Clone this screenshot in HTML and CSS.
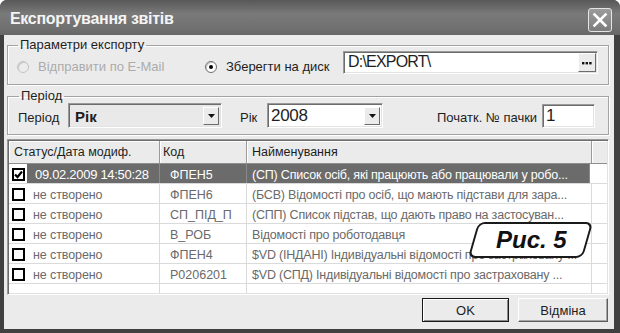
FILE: index.html
```html
<!DOCTYPE html>
<html lang="uk">
<head>
<meta charset="utf-8">
<title>Експортування звітів</title>
<link rel="stylesheet" href="styles.css">
</head>
<body>
<div class="window">
  <div class="titlebar">
    <span class="title">Експортування звітів</span>
    <span class="close"><svg width="16" height="16" viewBox="0 0 16 16"><path d="M2.5 2.5L13.5 13.5M13.5 2.5L2.5 13.5" stroke="#fff" stroke-width="2.6" stroke-linecap="square"/></svg></span>
  </div>
  <div class="client">
    <fieldset class="group group-export">
      <legend>Параметри експорту</legend>
      <div class="row row-export">
        <label class="radio radio-mail disabled"><span class="rb"></span>Відправити по E-Mail</label>
        <label class="radio radio-disk"><span class="rb checked"></span>Зберегти на диск</label>
        <div class="edit path">
          <span class="value">D:\EXPORT\</span>
          <span class="browse"><svg width="10" height="4" viewBox="0 0 10 4"><rect x="0" y="1" width="2.4" height="2.4" fill="#111"/><rect x="3.6" y="1" width="2.4" height="2.4" fill="#111"/><rect x="7.2" y="1" width="2.4" height="2.4" fill="#111"/></svg></span>
        </div>
      </div>
    </fieldset>
    <fieldset class="group group-period">
      <legend>Період</legend>
      <div class="row row-period">
        <span class="lbl lbl-period">Період</span>
        <div class="combo combo-period"><span class="value">Рік</span><span class="drop"><svg width="7" height="4" viewBox="0 0 7 4"><path d="M0 0H7L3.5 4Z" fill="#111"/></svg></span></div>
        <span class="lbl lbl-year">Рік</span>
        <div class="combo combo-year"><span class="value">2008</span><span class="drop"><svg width="7" height="4" viewBox="0 0 7 4"><path d="M0 0H7L3.5 4Z" fill="#111"/></svg></span></div>
        <span class="lbl lbl-pack">Початк. № пачки</span>
        <div class="edit pack"><span class="value">1</span></div>
      </div>
    </fieldset>
    <div class="grid">
      <div class="ghead">
        <span class="hc">Статус/Дата модиф.</span>
        <span class="hc">Код</span>
        <span class="hc">Найменування</span>
        <span class="hc"></span>
      </div>
      <div class="gbody">
        <div class="grow selected">
          <span class="cb"><span class="box checked"><svg width="9" height="9" viewBox="0 0 9 9"><path d="M1 4.5L3.5 7L8 1.5" stroke="#000" stroke-width="2.2" fill="none"/></svg></span></span>
          <span class="c c-status">09.02.2009 14:50:28</span>
          <span class="c c-code">ФПЕН5</span>
          <span class="c c-name">(СП) Список осіб, які працюють або працювали у робо...</span>
          <span class="c c-end"></span>
        </div>
        <div class="grow">
          <span class="cb"><span class="box"></span></span>
          <span class="c c-status">не створено</span>
          <span class="c c-code">ФПЕН6</span>
          <span class="c c-name">(БСВ) Відомості про осіб, що мають підстави для зара...</span>
          <span class="c c-end"></span>
        </div>
        <div class="grow">
          <span class="cb"><span class="box"></span></span>
          <span class="c c-status">не створено</span>
          <span class="c c-code">СП_ПІД_П</span>
          <span class="c c-name">(СПП) Список підстав, що дають право на застосуван...</span>
          <span class="c c-end"></span>
        </div>
        <div class="grow">
          <span class="cb"><span class="box"></span></span>
          <span class="c c-status">не створено</span>
          <span class="c c-code">В_РОБ</span>
          <span class="c c-name">Відомості про роботодавця</span>
          <span class="c c-end"></span>
        </div>
        <div class="grow">
          <span class="cb"><span class="box"></span></span>
          <span class="c c-status">не створено</span>
          <span class="c c-code">ФПЕН4</span>
          <span class="c c-name">$VD (ІНДАНІ) Індивідуальні відомості про застраховану ...</span>
          <span class="c c-end"></span>
        </div>
        <div class="grow">
          <span class="cb"><span class="box"></span></span>
          <span class="c c-status">не створено</span>
          <span class="c c-code">Р0206201</span>
          <span class="c c-name">$VD (СПД) Індивідуальні відомості про застраховану ...</span>
          <span class="c c-end"></span>
        </div>
        <div class="grow filler">
          <span class="cb"></span>
          <span class="c c-status"></span>
          <span class="c c-code"></span>
          <span class="c c-name"></span>
          <span class="c c-end"></span>
        </div>
      </div>
    </div>
    <div class="buttons">
      <span class="btn btn-default">OK</span>
      <span class="btn">Відміна</span>
    </div>
  </div>
  <div class="badge"><span class="badge-text">Рис. 5</span></div>
</div>
</body>
</html>
```
FILE: styles.css
```css
* { box-sizing: border-box; }
html, body { margin: 0; padding: 0; }
body {
  width: 620px;
  height: 333px;
  overflow: hidden;
  background: #ffffff;
  font-family: "Liberation Sans", Arial, sans-serif;
  font-size: 13px;
  color: #1e1e1e;
}
.window {
  position: relative;
  width: 620px;
  height: 333px;
  display: flex;
  flex-direction: column;
  background: #404040;
  border-radius: 7px 7px 0 0;
  overflow: hidden;
}
.titlebar {
  height: 35px;
  flex: none;
  display: flex;
  align-items: center;
  justify-content: space-between;
  padding: 3px 8px 0 10px;
  background: linear-gradient(#585858, #7a7a7a 40%, #707070 80%, #666666);
}
.title {
  color: #f4f4f4;
  font-weight: bold;
  font-size: 16px;
  letter-spacing: -0.3px;
}
.close {
  align-self: flex-start;
  margin-top: 5px;
  width: 24px;
  height: 24px;
  border: 1px solid #e4e4e4;
  border-radius: 3px;
  display: flex;
  align-items: center;
  justify-content: center;
  background: linear-gradient(#9c9c9c, #7c7c7c);
}
.client {
  flex: 1;
  margin: 0 6px 4px 4px;
  background: #ebebeb;
  display: flex;
  flex-direction: column;
}
.group {
  margin: 0 5px 0 3px;
  border: 1px solid #a3a3a3;
  box-shadow: 1px 1px 0 #ffffff, inset 1px 1px 0 #ffffff;
  min-width: 0;
}
.group legend {
  padding: 0 2px;
  margin-left: 1px;
  line-height: 12px;
  font-size: 13px;
  color: #1e1e1e;
}
.group-export {
  margin-top: 4px;
  padding: 0 10px 10px 9px;
}
.group-period {
  margin-top: 5px;
  padding: 1px 13px 6px 10px;
}
.row {
  display: flex;
}
.row-export {
  height: 23px;
  align-items: flex-start;
}
.radio {
  display: flex;
  align-items: center;
  gap: 9px;
  padding-top: 8px;
  line-height: 15px;
  white-space: nowrap;
}
.radio-mail { width: 188px; }
.radio-disk { width: 138px; }
.radio.disabled { color: #ababab; }
.rb {
  position: relative;
  width: 12px;
  height: 12px;
  border-radius: 50%;
  border: 1px solid #6e6e6e;
  background: #ffffff;
  box-shadow: inset 1px 1px 0 #c8c8c8;
  flex: none;
}
.disabled .rb {
  border-color: #c4c4c4;
  background: #ececec;
}
.rb.checked::after {
  content: "";
  position: absolute;
  left: 3px;
  top: 3px;
  width: 4px;
  height: 4px;
  border-radius: 50%;
  background: #000;
}
.edit, .combo {
  display: flex;
  align-items: center;
  border: 1px solid;
  border-color: #9a9a9a #ffffff #ffffff #9a9a9a;
  box-shadow: inset 1px 1px 0 #6c6c6c, inset -1px -1px 0 #e2e2e2;
  background: #ffffff;
}
.edit.path {
  flex: 1;
  height: 23px;
  padding: 0 1px 0 4px;
}
.path .value {
  flex: 1;
  font-size: 16px;
  letter-spacing: -0.8px;
  line-height: 18px;
  align-self: flex-start;
  padding-top: 1px;
}
.browse {
  width: 18px;
  height: 19px;
  display: flex;
  align-items: center;
  justify-content: center;
  background: #ebebeb;
  border: 1px solid;
  border-color: #ffffff #6c6c6c #6c6c6c #ffffff;
}
.row-period {
  height: 25px;
  align-items: center;
}
.lbl {
  white-space: nowrap;
  padding-top: 4px;
}
.lbl-period { width: 50px; }
.lbl-year { width: 27px; margin-left: 18px; }
.lbl-pack { width: 105px; margin-left: 54px; }
.combo {
  height: 25px;
  padding: 0 2px 0 6px;
}
.combo .value { flex: 1; }
.combo-period {
  width: 154px;
  background: #e9e9e9;
}
.combo-period .value {
  font-weight: bold;
  font-size: 15px;
  padding-top: 2px;
}
.combo-year {
  width: 116px;
  padding-left: 3px;
}
.combo-year .value {
  font-size: 17px;
  letter-spacing: -0.3px;
}
.drop {
  width: 16px;
  height: 18px;
  display: flex;
  align-items: center;
  justify-content: center;
  background: #ebebeb;
  border: 1px solid;
  border-color: #ffffff #6c6c6c #6c6c6c #ffffff;
}
.edit.pack {
  width: 53px;
  height: 24px;
  padding-left: 3px;
}
.pack .value {
  font-size: 17px;
}
.grid {
  margin: 4px 5px 0 3px;
  height: 156px;
  display: flex;
  flex-direction: column;
  border: 1px solid;
  border-color: #9a9a9a #ffffff #ffffff #9a9a9a;
  box-shadow: inset 1px 1px 0 #6c6c6c, inset -1px -1px 0 #e2e2e2;
  background: #ffffff;
  padding: 1px;
  overflow: hidden;
}
.ghead {
  flex: none;
  height: 23px;
  display: grid;
  grid-template-columns: 151px 87px 345px 1fr;
  background: #ebebeb;
  border-bottom: 1px solid #8e8e8e;
}
.hc {
  font-size: 12.5px;
  line-height: 22px;
  padding-left: 5px;
  border-right: 1px solid #9a9a9a;
  box-shadow: inset 1px 1px 0 #ffffff;
  white-space: nowrap;
}
.hc:nth-child(2) { padding-left: 3px; }
.hc:last-child { border-right: none; }
.gbody {
  flex: 1;
  display: flex;
  flex-direction: column;
}
.grow {
  height: 20px;
  flex: none;
  display: grid;
  grid-template-columns: 18px 133px 87px 345px 1fr;
  border-bottom: 1px solid #dadada;
  color: #6a6a6a;
  font-size: 12.5px;
}
.grow.filler {
  flex: 1;
  border-bottom: none;
}
.cb {
  display: flex;
  align-items: center;
  padding: 2px 0 0 3px;
}
.box {
  width: 13px;
  height: 13px;
  border: 2px solid #000;
  background: #fff;
  display: flex;
  align-items: center;
  justify-content: center;
}
.c {
  white-space: nowrap;
  overflow: hidden;
  line-height: 16px;
  padding-top: 3px;
  border-right: 1px solid #dadada;
}
.c-status {
  padding-left: 6px;
  letter-spacing: -0.1px;
}
.c-code { padding-left: 10px; }
.c-name { padding-left: 5px; letter-spacing: -0.2px; }
.c-end { border-right: none; }
.selected .c-status, .selected .c-code, .selected .c-name {
  background: #6b6b6b;
  color: #ffffff;
  border-right-color: #8a8a8a;
}
.selected .c-status { padding-left: 8px; font-size: 13px; letter-spacing: -0.3px; }
.selected .c-name { margin-right: 2px; }
.buttons {
  display: flex;
  justify-content: flex-end;
  gap: 9px;
  margin-top: 3px;
  padding-right: 6px;
}
.btn {
  height: 24px;
  width: 90px;
  display: flex;
  align-items: center;
  justify-content: center;
  background: #ebebeb;
  border: 1px solid;
  border-color: #ffffff #5c5c5c #5c5c5c #ffffff;
  box-shadow: inset -1px -1px 0 #a8a8a8;
  font-size: 13px;
}
.btn-default {
  width: 87px;
  border: 1px solid #1a1a1a;
  box-shadow: inset 1px 1px 0 #ffffff, inset -1px -1px 0 #8a8a8a;
}
.badge {
  position: absolute;
  left: 473px;
  top: 222px;
  width: 115px;
  height: 36px;
  transform: skewX(-16deg);
  border: 2.5px solid #1a1a1a;
  border-radius: 7px;
  background: #ffffff;
  display: flex;
  align-items: center;
  justify-content: center;
}
.badge-text {
  transform: skewX(16deg);
  font-weight: bold;
  font-style: italic;
  font-size: 24px;
  color: #111;
  padding-left: 2px;
}
```
